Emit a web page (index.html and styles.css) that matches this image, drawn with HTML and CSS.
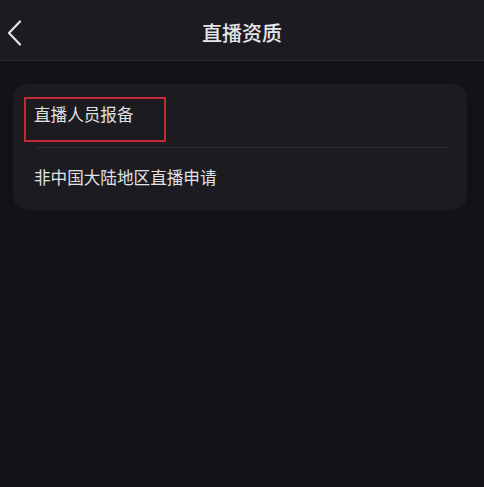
FILE: index.html
```html
<!DOCTYPE html>
<html lang="zh-CN">
<head>
<meta charset="utf-8">
<title>直播资质</title>
<link rel="stylesheet" href="styles.css">
</head>
<body>
<header class="topbar">
  <button class="back" aria-label="返回">
    <svg width="16" height="26" viewBox="0 0 16 26"><path d="M13 1.5 L2 13 L13 24.5" fill="none" stroke="#e2e2e4" stroke-width="2.2" stroke-linecap="round" stroke-linejoin="round"/></svg>
  </button>
  <h1 class="title">直播资质</h1>
  <span class="spacer"></span>
</header>
<main class="content">
  <section class="card">
    <div class="row row-first">
      <span class="label highlighted">直播人员报备</span>
    </div>
    <div class="divider"></div>
    <div class="row row-second">
      <span class="label">非中国大陆地区直播申请</span>
    </div>
  </section>
</main>
</body>
</html>
```

FILE: styles.css
```css
html, body {
  margin: 0;
  padding: 0;
}
body {
  width: 484px;
  height: 487px;
  background: #131216;
  font-family: "Noto Sans CJK SC", "Noto Sans", sans-serif;
  color: #e4e4e6;
  overflow: hidden;
}
.topbar {
  display: grid;
  grid-template-columns: 40px 1fr 40px;
  align-items: center;
  height: 55px;
  padding-top: 5px;
  background: #1c1b21;
  border-bottom: 1px solid #2a2930;
}
.back {
  display: flex;
  align-items: center;
  justify-content: flex-start;
  padding: 0 0 0 7px;
  margin: 0;
  background: none;
  border: none;
  height: 30px;
}
.title {
  margin: 0;
  text-align: center;
  font-size: 20px;
  font-weight: 500;
  line-height: 28px;
  color: #e6e6e8;
}
.content {
  padding: 23px 17px 0 13px;
}
.card {
  background: #1c1b20;
  border-radius: 14px;
  height: 126px;
}
.row {
  display: flex;
  align-items: flex-start;
}
.row-first {
  padding: 13px 0 0 11px;
  height: 50px;
}
.row-second {
  padding: 18px 0 0 21px;
}
.label {
  font-size: 16.6px;
  line-height: 22px;
  color: #e2e2e4;
}
.highlighted {
  display: inline-block;
  box-sizing: border-box;
  width: 142px;
  height: 45px;
  padding: 4px 0 0 8px;
  border: 2px solid #c42a36;
}
.divider {
  height: 1px;
  background: #2a2930;
  margin: 0 19px 0 23px;
}
```
